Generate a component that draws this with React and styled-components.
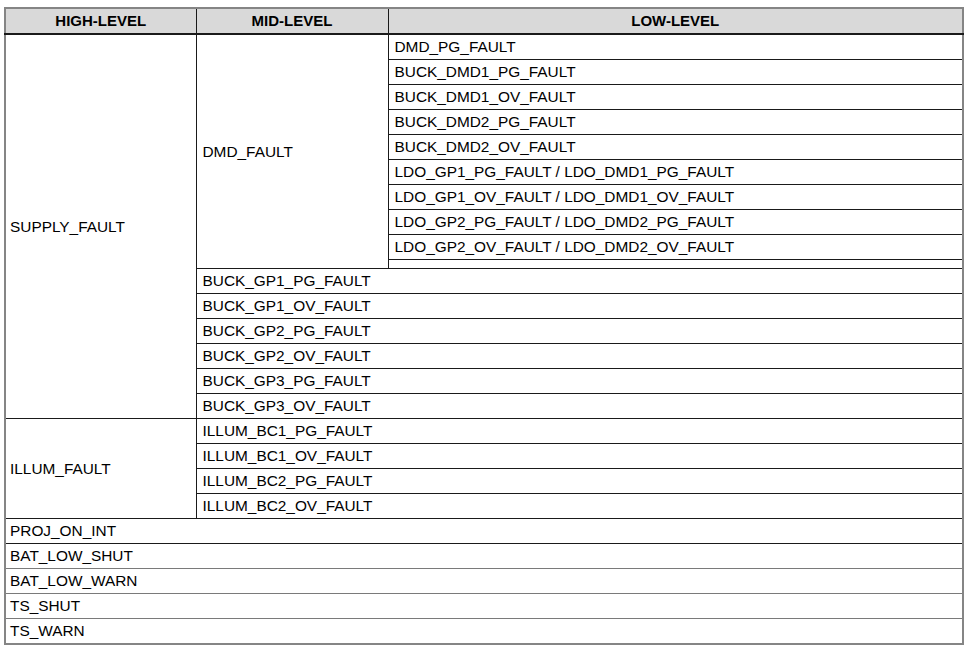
import React from 'react';
import styled, { createGlobalStyle } from 'styled-components';

const GlobalStyle = createGlobalStyle`
  html, body {
    margin: 0;
    padding: 0;
    background: #ffffff;
  }
  body {
    font-family: 'Liberation Sans', Arial, sans-serif;
    color: #000000;
  }
`;

const Page = styled.div`
  width: 971px;
  height: 647px;
  padding: 7px 0 0 4px;
  box-sizing: border-box;
  overflow: hidden;
`;

const Table = styled.table`
  width: 960px;
  border-collapse: collapse;
  table-layout: fixed;
  border: 2px solid #858585;
  font-size: 15.4px;
`;

const HeadCell = styled.th`
  background: #d9d9d9;
  font-weight: 700;
  font-size: 15px;
  text-align: center;
  height: 24px;
  padding: 0;
  border-left: 1px solid #1a1a1a;
  border-bottom: 2px solid #1a1a1a;
  line-height: 24px;
`;

const Cell = styled.td`
  height: ${(p) => (p.$short ? '8px' : '24px')};
  padding: ${(p) => (p.$short ? '0' : p.$first ? '0 4px' : '0 6px')};
  line-height: ${(p) => (p.$short ? '8px' : '24px')};
  vertical-align: middle;
  white-space: nowrap;
  border: 1px solid ${(p) => (p.$soft ? '#7a7a7a' : '#1a1a1a')};
`;

const dmdLows = [
  'DMD_PG_FAULT',
  'BUCK_DMD1_PG_FAULT',
  'BUCK_DMD1_OV_FAULT',
  'BUCK_DMD2_PG_FAULT',
  'BUCK_DMD2_OV_FAULT',
  'LDO_GP1_PG_FAULT / LDO_DMD1_PG_FAULT',
  'LDO_GP1_OV_FAULT / LDO_DMD1_OV_FAULT',
  'LDO_GP2_PG_FAULT / LDO_DMD2_PG_FAULT',
  'LDO_GP2_OV_FAULT / LDO_DMD2_OV_FAULT',
];

const buckMids = [
  'BUCK_GP1_PG_FAULT',
  'BUCK_GP1_OV_FAULT',
  'BUCK_GP2_PG_FAULT',
  'BUCK_GP2_OV_FAULT',
  'BUCK_GP3_PG_FAULT',
  'BUCK_GP3_OV_FAULT',
];

const illumMids = [
  'ILLUM_BC1_PG_FAULT',
  'ILLUM_BC1_OV_FAULT',
  'ILLUM_BC2_PG_FAULT',
  'ILLUM_BC2_OV_FAULT',
];

const singles = ['PROJ_ON_INT', 'BAT_LOW_SHUT', 'BAT_LOW_WARN', 'TS_SHUT', 'TS_WARN'];

export default function App() {
  const supplySpan = dmdLows.length + 1 + buckMids.length;

  return (
    <Page>
      <GlobalStyle />
      <Table>
        <colgroup>
          <col style={{ width: 191 }} />
          <col style={{ width: 192 }} />
          <col />
        </colgroup>
        <thead>
          <tr>
            <HeadCell>HIGH-LEVEL</HeadCell>
            <HeadCell>MID-LEVEL</HeadCell>
            <HeadCell>LOW-LEVEL</HeadCell>
          </tr>
        </thead>
        <tbody>
          {dmdLows.map((low, i) => (
            <tr key={low}>
              {i === 0 && (
                <Cell $first rowSpan={supplySpan}>
                  SUPPLY_FAULT
                </Cell>
              )}
              {i === 0 && <Cell rowSpan={dmdLows.length + 1}>DMD_FAULT</Cell>}
              <Cell>{low}</Cell>
            </tr>
          ))}
          <tr>
            <Cell $short />
          </tr>
          {buckMids.map((mid) => (
            <tr key={mid}>
              <Cell colSpan={2}>{mid}</Cell>
            </tr>
          ))}
          {illumMids.map((mid, i) => (
            <tr key={mid}>
              {i === 0 && (
                <Cell $first rowSpan={illumMids.length}>
                  ILLUM_FAULT
                </Cell>
              )}
              <Cell colSpan={2}>{mid}</Cell>
            </tr>
          ))}
          {singles.map((name, i) => (
            <tr key={name}>
              <Cell $first colSpan={3} $soft={i > 0}>
                {name}
              </Cell>
            </tr>
          ))}
        </tbody>
      </Table>
    </Page>
  );
}
